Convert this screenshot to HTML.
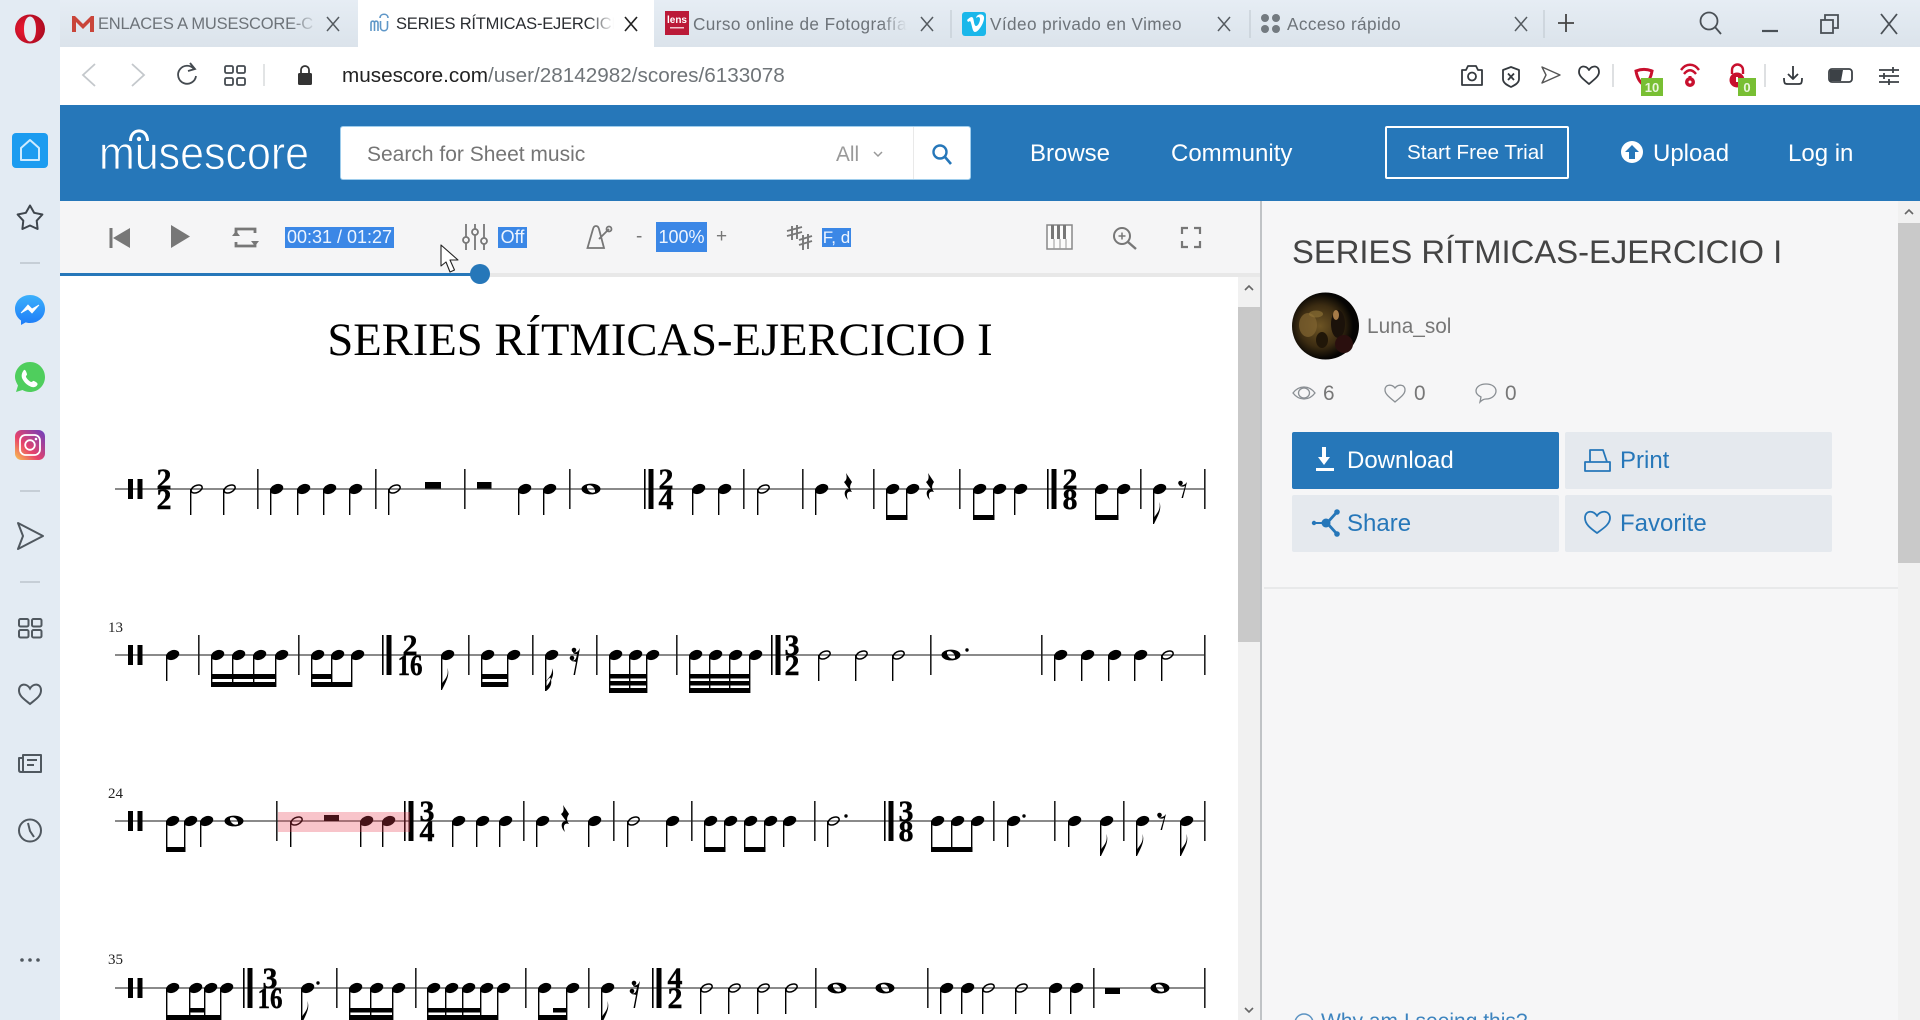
<!DOCTYPE html>
<html lang="en"><head><meta charset="utf-8"><title>SERIES RÍTMICAS-EJERCICIO I</title>
<style>
html,body{margin:0;padding:0;width:1920px;height:1020px;overflow:hidden;background:#fff;font-family:"Liberation Sans",sans-serif}
.a{position:absolute}
.t{position:absolute;white-space:nowrap}
.tab{font-size:17.2px;letter-spacing:.4px;line-height:24px;top:12px;color:#6d7379;overflow:hidden}
.cap{font-size:16.5px;letter-spacing:-.2px}
.f{-webkit-mask-image:linear-gradient(to right,#000 88%,transparent);mask-image:linear-gradient(to right,#000 88%,transparent)}
.nav{color:#fff;font-size:24px;line-height:30px;top:139px}
.sel{background:#3b87e6;color:#eef5ff;font-size:18px;line-height:21px;top:227px;height:21px;text-align:center}
.pm{color:#777;font-size:19px;line-height:22px;top:226px}
.stat{color:#777;font-size:20.8px;line-height:24px;top:382px}
.btn{position:absolute;border-radius:2px;background:#e5e9ee;color:#2677b9;font-size:24px;line-height:57px;height:57px;width:267px}
svg{position:absolute;left:0;top:0}
.ts{font:bold 30px "Liberation Serif",serif;text-anchor:middle;stroke:#000;stroke-width:.4}
.mn{font:15px "Liberation Serif",serif;fill:#222}
</style></head><body>
<!-- chrome backgrounds -->
<div class="a" style="left:0;top:0;width:1920px;height:47px;background:linear-gradient(#e6edf4,#dbe3eb)"></div>
<div class="a" style="left:0;top:0;width:60px;height:1020px;background:#e3ebf3"></div>
<div class="a" style="left:358px;top:0;width:296px;height:47px;background:#fff"></div>
<div class="a" style="left:60px;top:47px;width:1860px;height:58px;background:#fff"></div>
<div class="a" style="left:60px;top:105px;width:1860px;height:96px;background:#2677b9"></div>
<div class="a" style="left:60px;top:201px;width:1200px;height:72px;background:#f5f5f6"></div>
<div class="a" style="left:480px;top:273px;width:780px;height:4px;background:#e8e8e8"></div>
<div class="a" style="left:60px;top:273px;width:420px;height:3px;background:#2677b9"></div>
<div class="a" style="left:1238px;top:277px;width:22px;height:743px;background:#f1f1f1"></div>
<div class="a" style="left:1238px;top:307px;width:22px;height:335px;background:#c9c9c9"></div>
<div class="a" style="left:1260px;top:201px;width:2px;height:819px;background:#c0c3c6"></div>
<div class="a" style="left:1262px;top:201px;width:658px;height:819px;background:#f6f6f7"></div>
<div class="a" style="left:1898px;top:201px;width:22px;height:819px;background:#f1f1f1"></div>
<div class="a" style="left:1898px;top:223px;width:22px;height:340px;background:#c9c9c9"></div>
<div class="a" style="left:1264px;top:587px;width:634px;height:2px;background:#e8e9ea"></div>
<!-- search -->
<div class="a" style="left:341px;top:127px;width:629px;height:52px;background:#fff;border-radius:2px;box-shadow:0 0 0 1px #9fcdec"></div>
<div class="a" style="left:913px;top:127px;width:1px;height:52px;background:#e9e9e9"></div>
<!-- trial button -->
<div class="a" style="left:1385px;top:126px;width:184px;height:53px;border:2px solid #fff;box-sizing:border-box;border-radius:2px"></div>

<!-- tab text -->
<div class="t tab cap f" style="left:98px;width:220px">ENLACES A MUSESCORE-C</div>
<div class="t tab cap f" style="left:396px;width:218px;color:#2a2d31">SERIES RÍTMICAS-EJERCICI</div>
<div class="t tab f" style="left:693px;width:214px">Curso online de Fotografía</div>
<div class="t tab" style="left:990px">Vídeo privado en Vimeo</div>
<div class="t tab" style="left:1287px">Acceso rápido</div>
<!-- url -->
<div class="t" style="left:342px;top:63px;font-size:20.7px;line-height:26px;color:#222">musescore.com<span style="color:#6f7478">/user/28142982/scores/6133078</span></div>
<!-- search text -->
<div class="t" style="left:367px;top:142px;font-size:21px;line-height:26px;color:#757575">Search for Sheet music</div>
<div class="t" style="left:836px;top:142px;font-size:20.8px;line-height:26px;color:#999">All</div>
<div class="t nav" style="left:1030px">Browse</div>
<div class="t nav" style="left:1171px">Community</div>
<div class="t" style="left:1407px;top:140px;font-size:20.7px;line-height:26px;color:#fff">Start Free Trial</div>
<div class="t nav" style="left:1653px">Upload</div>
<div class="t nav" style="left:1788px">Log in</div>
<!-- toolbar text -->
<div class="t sel" style="left:285px;width:109px">00:31 / 01:27</div>
<div class="t sel" style="left:498px;width:29px">Off</div>
<div class="t sel" style="left:656px;top:222px;width:51px;height:30px;line-height:30px">100%</div>
<div class="t sel" style="left:822px;width:29px;top:228px;height:19px;line-height:19px;font-size:17px">F, d</div>
<div class="t pm" style="left:636px">-</div>
<div class="t pm" style="left:716px">+</div>
<!-- right panel -->
<div class="t" style="left:1292px;top:232px;font-size:32.8px;line-height:40px;color:#444">SERIES RÍTMICAS-EJERCICIO I</div>
<div class="t" style="left:1367px;top:315px;font-size:20.8px;line-height:24px;color:#777">Luna_sol</div>
<div class="t stat" style="left:1323px">6</div>
<div class="t stat" style="left:1414px">0</div>
<div class="t stat" style="left:1505px">0</div>
<div class="btn" style="left:1292px;top:432px;background:#2677b9;color:#fff;text-indent:55px">Download</div>
<div class="btn" style="left:1565px;top:432px;text-indent:55px">Print</div>
<div class="btn" style="left:1292px;top:495px;text-indent:55px">Share</div>
<div class="btn" style="left:1565px;top:495px;text-indent:55px">Favorite</div>

<svg width="1920" height="1020" viewBox="0 0 1920 1020" xmlns="http://www.w3.org/2000/svg">
<defs>
<linearGradient id="ms" x1="0" y1="1" x2="0" y2="0"><stop offset="0" stop-color="#1e7cf8"/><stop offset="1" stop-color="#3cb0fb"/></linearGradient>
<linearGradient id="ig" x1="0" y1="1" x2="1" y2="0"><stop offset="0" stop-color="#f9c74f"/><stop offset=".4" stop-color="#e8436a"/><stop offset="1" stop-color="#6a3fc0"/></linearGradient>
<radialGradient id="op" cx=".35" cy=".5" r=".7"><stop offset="0" stop-color="#f01a32"/><stop offset="1" stop-color="#a80a20"/></radialGradient>
<radialGradient id="av" cx=".42" cy=".5" r=".52"><stop offset="0" stop-color="#6d5424"/><stop offset=".6" stop-color="#3c2c12"/><stop offset=".95" stop-color="#050403"/></radialGradient>
<g id="hd"><ellipse cx="6.6" rx="6.9" ry="4.7" transform="rotate(-22 6.6 0)"/></g>
<g id="q"><use href="#hd"/><rect x="0" width="1.4" height="26"/></g>
<g id="q2"><use href="#hd"/><rect x="0" width="1.4" height="32"/></g>
<g id="q3"><use href="#hd"/><rect x="0" width="1.4" height="38"/></g>
<g id="h"><ellipse cx="6.6" rx="5.9" ry="3.5" fill="none" stroke="#000" stroke-width="1.5" transform="rotate(-25 6.6 0)"/><rect x="0" width="1.4" height="26"/></g>
<path id="w" fill-rule="evenodd" d="M-9.5 0a9.5 5.4 0 1 0 19 0a9.5 5.4 0 1 0-19 0ZM-4-3C0-5.500 4.500-1 4 3 0 5.500-4.500 1-4-3Z"/>
<g id="e"><use href="#hd"/><path d="M0 0h1.400v28c2.500-4 6.500-7 5-15 2.600 7-1 13-5.400 22H0Z"/></g>
<g id="s"><use href="#hd"/><path d="M0 0h1.400v26c2.500-4 6.500-6 5.500-13 2.500 6 .500 9-.8 12 1 5-2 9-5 11H0ZM1.500 31c2-2 4-5 4.300-8-1-1-3 1.500-4.300 3.500Z"/></g>
<rect id="b" x="0" y="-20" width="1.600" height="40" fill="#222"/>
<g id="d"><rect x="0" y="-20" width="1.600" height="40"/><rect x="4.500" y="-20" width="5" height="40"/></g>
<path id="r4" d="M-2-16 4-7C2-4 1-1 4 3 1 2-3 3 0 11-5 6-4 0 1 0L-4-7C-1-9-1-12-2-16Z"/>
<g id="r8"><circle cx="-2.500" cy="-6" r="2.300"/><path d="M-4-4C-1-3 2-4 4-7L0 9H-1.500L2-3C0-2-3-2-4-4Z"/></g>
<g id="r16"><circle cx="-1" cy="-5" r="2.300"/><circle cx="-3" cy="3" r="2.300"/><path d="M-2-3C1-2 3-3 5-7L0 20H-1.500L1 7C-1 6-3 7-4 5 0 6 1 5 2-1 0-1-2-1-2-3Z"/></g>
<g id="cl"><path d="M115 0H1204" stroke="#444" stroke-width="1.200" fill="none"/><rect x="128" y="-10" width="5" height="20"/><rect x="137.500" y="-10" width="5" height="20"/></g>
</defs>

<!-- opera & sidebar -->
<path fill="url(#op)" fill-rule="evenodd" d="M15 29a15 14.500 0 1 0 30 0a15 14.500 0 1 0-30 0ZM24 29c0-8 2.700-12.500 6-12.500s6 4.500 6 12.500-2.700 12.500-6 12.500-6-4.500-6-12.500Z"/>
<rect x="12" y="133" width="36" height="35" rx="4" fill="#1c9cf0"/>
<path d="M30 140 39 148V160H21V148Z" fill="none" stroke="#cdeBff" stroke-width="2" stroke-linejoin="round"/>
<polygon points="30,205.500 34.100,212.800 42.400,214.500 36.700,220.700 37.600,229 30,225.500 22.400,229 23.300,220.700 17.600,214.500 25.900,212.800" fill="none" stroke="#3f464d" stroke-width="2" stroke-linejoin="round"/>
<rect x="20" y="262" width="20" height="2" fill="#c6ced6"/>
<rect x="20" y="490" width="20" height="2" fill="#c6ced6"/>
<rect x="20" y="581" width="20" height="2" fill="#c6ced6"/>
<path d="M30 295c8.500 0 15 6 15 14 0 8-6.500 14-15 14-1.500 0-3-.2-4.300-.6L21 325v-4.500C17.500 318 15 314 15 309c0-8 6.500-14 15-14Z" fill="url(#ms)"/>
<path d="M21 313 28 305 32 309 39 305 32 313 28 309Z" fill="#fff" stroke="#fff" stroke-width=".8"/>
<path d="M30 362c8.300 0 15 6.700 15 15s-6.700 15-15 15c-2.700 0-5.300-.7-7.500-2L16 392l2-6.500c-1.300-2.300-3-5.500-3-8.500 0-8.300 6.700-15 15-15Z" fill="#4fce5d"/>
<path d="M24 370c1.500-1 2.500 2.500 3 4 .3 1-1.500 2-1 3 1 2 3 4 5 5 1 .3 2-1.500 3-1 1.500.7 4 2 3.500 3.500-1 2.500-4 3.500-7 2-4-1.500-7-5-8.500-8.500-1-3 .5-6.500 2-8Z" fill="#fff"/>
<rect x="15" y="430" width="30" height="30" rx="6.500" fill="url(#ig)"/>
<rect x="20" y="435" width="20" height="20" rx="5.500" fill="none" stroke="#fff" stroke-width="1.800"/><circle cx="30" cy="445" r="4.800" fill="none" stroke="#fff" stroke-width="1.800"/><circle cx="36" cy="439" r="1.300" fill="#fff"/>
<path d="M18 523 43 536 18 549 23 536Z" fill="none" stroke="#50585f" stroke-width="2" stroke-linejoin="round"/>
<g fill="none" stroke="#50585f" stroke-width="2"><rect x="19" y="619" width="9.500" height="7.500" rx="1.500"/><rect x="32" y="619" width="9.500" height="7.500" rx="1.500"/><rect x="19" y="630" width="9.500" height="7.500" rx="1.500"/><rect x="32" y="630" width="9.500" height="7.500" rx="1.500"/>
<path d="M30 704C24 699 19 696 19 690.500 19 683 27 683 30 688.500 33 683 41 683 41 690.500 41 696 36 699 30 704Z"/>
<path d="M23 755H41V772H21C19.500 772 19 771 19 770V758H23ZM23 758V771M27 760H37M27 765H34" stroke-linejoin="round"/>
<circle cx="30" cy="830.500" r="11"/><path d="M28 823 30 831 34 837"/></g>
<g fill="#50585f"><circle cx="22" cy="960" r="1.800"/><circle cx="30" cy="960" r="1.800"/><circle cx="38" cy="960" r="1.800"/></g>

<!-- tabs icons -->
<path d="M72 32V16H75L83 24 91 16H94V32H90V22L83 29 76 22V32Z" fill="#c9453a"/>
<g fill="none" stroke="#5f97c8" stroke-width="1.600"><path d="M371 31V23c0-2.500 3.500-2.500 3.500 0v8M374.500 23c0-2.500 3.500-2.500 3.500 0v8"/><path d="M380.500 21v6c0 5 7 5 7 0v-6M380 18c0-5 8-5 8 0"/></g>
<rect x="665" y="11" width="24" height="24" fill="#bb1a38"/><text x="677" y="23" font-family="Liberation Sans" font-size="10" font-weight="bold" fill="#fff" text-anchor="middle">lens</text><rect x="670" y="27" width="14" height="1.500" fill="#f2c4cd"/>
<rect x="962" y="12" width="24" height="24" rx="3" fill="#1ab7ea"/><path d="M967 20c3-3 5-4 6-2 1 2 1 8 3 8s4-4 4-7-3-2-4-1c1-5 9-5 8 1-1 6-6 13-9 13-3 0-3-9-5-11l-2 1Z" fill="#fff"/>
<g fill="#737a80"><circle cx="1265" cy="18" r="4"/><circle cx="1276" cy="18" r="4"/><circle cx="1265" cy="29" r="4"/><circle cx="1276" cy="29" r="4"/></g>
<g stroke="#555b60" stroke-width="1.500" fill="none">
<path d="M327 17 339 31M339 17 327 31"/><path d="M921 17 933 31M933 17 921 31"/><path d="M1218 17 1230 31M1230 17 1218 31"/><path d="M1515 17 1527 31M1527 17 1515 31"/></g>
<path d="M625 17 637 31M637 17 625 31" stroke="#222" stroke-width="1.600"/>
<path d="M951 10V38M1250 10V38M1544 10V38" stroke="#c3cbd3" stroke-width="1.200"/>
<path d="M1566 14V32M1558 23H1574" stroke="#444" stroke-width="1.800"/>
<g fill="none" stroke="#4a5056" stroke-width="1.800"><circle cx="1709" cy="21" r="8.500"/><path d="M1715 27 1721 34"/><path d="M1762 31H1778" stroke-width="2.200"/><rect x="1821" y="20" width="12" height="13"/><path d="M1825 20V15H1838V28H1833"/><path d="M1881 14 1897 34M1897 14 1881 34"/></g>

<!-- address bar icons -->
<path d="M95 64 83 75 95 86" fill="none" stroke="#c4c8cc" stroke-width="1.800"/>
<path d="M132 64 144 75 132 86" fill="none" stroke="#c4c8cc" stroke-width="1.800"/>
<path d="M194 69A9 9 0 1 0 196 76M190 63 195 69 188 71" fill="none" stroke="#444a50" stroke-width="1.800"/>
<g fill="none" stroke="#444a50" stroke-width="1.800"><rect x="225" y="66" width="8" height="7" rx="1.500"/><rect x="237" y="66" width="8" height="7" rx="1.500"/><rect x="225" y="78" width="8" height="7" rx="1.500"/><rect x="237" y="78" width="8" height="7" rx="1.500"/></g>
<path d="M264 64V86" stroke="#d8dadc" stroke-width="1.500"/>
<path d="M301 73V70a4 4 0 0 1 8 0V73" fill="none" stroke="#333" stroke-width="1.800"/><rect x="298" y="73" width="14" height="12" rx="1.500" fill="#333"/>
<g fill="none" stroke="#34393e" stroke-width="1.800" stroke-linejoin="round"><path d="M1462 70H1466L1468 66H1476L1478 70H1482V85H1462Z"/><circle cx="1472" cy="76.500" r="4"/>
<path d="M1511 67 1519 70V79C1519 83 1515 85 1511 87 1507 85 1503 83 1503 79V70ZM1508 73.500 1514 80M1514 73.500 1508 80"/>
<path d="M1542 67 1560 75 1542 83 1546 75Z" stroke-width="1.400" stroke="#555"/>
<path d="M1589 84C1583 79 1579 76 1579 72 1579 65 1586 65 1589 70 1592 65 1599 65 1599 72 1599 76 1595 79 1589 84Z"/>
<path d="M1793 66V79M1788 74 1793 79 1798 74M1784 78C1784 84 1785 84 1788 84H1798C1801 84 1802 84 1802 78"/></g>
<path d="M1613 64V87M1765 64V87" stroke="#d4d6d8" stroke-width="1.500"/>
<rect x="1829" y="69" width="23" height="13" rx="3" fill="none" stroke="#3c4146" stroke-width="1.800"/><path d="M1830 70H1843L1841 81H1830Z" fill="#3c4146"/>
<g stroke="#3c4146" stroke-width="1.800" fill="none"><path d="M1879 70H1899M1879 76H1899M1879 82H1899"/><path d="M1893 67V73M1884 73V79M1889 79V85"/></g>
<path d="M1636 71C1641 69 1647 69 1652 71 1651 77 1649 82 1644 85 1639 82 1637 77 1636 71Z" fill="none" stroke="#c8102e" stroke-width="3"/>
<rect x="1641" y="78" width="22" height="18" fill="#78bf33"/><text x="1652" y="92" font-size="13" font-weight="bold" text-anchor="middle" fill="#e9f5dc" font-family="Liberation Sans">10</text>
<g fill="none" stroke="#c8102e" stroke-width="2.400"><path d="M1681 70C1686 63 1694 63 1699 70M1684 74C1688 69 1692 69 1696 74"/></g><circle cx="1690" cy="82" r="5" fill="#c8102e"/><rect x="1688.500" y="76" width="3" height="6" fill="#c8102e"/><circle cx="1690" cy="82" r="1.500" fill="#fff"/>
<path d="M1732 74V70a5.500 5.500 0 0 1 11 0V74" fill="none" stroke="#c8102e" stroke-width="2.400"/><circle cx="1737" cy="80" r="7.500" fill="#c8102e"/><rect x="1736" y="77" width="2" height="5" fill="#fff"/>
<rect x="1738" y="78" width="18" height="18" fill="#78bf33"/><text x="1747" y="92" font-size="13" font-weight="bold" text-anchor="middle" fill="#e9f5dc" font-family="Liberation Sans">0</text>

<!-- logo -->
<text x="99" y="169" font-family="Liberation Sans" font-size="46" fill="#fff" stroke="#2677b9" stroke-width=".8" textLength="210" lengthAdjust="spacingAndGlyphs">musescore</text>
<path d="M130.500 141C130.500 127.500 147.500 127.500 147.500 141" fill="none" stroke="#fff" stroke-width="3"/><circle cx="139" cy="139" r="2.200" fill="#fff"/>
<!-- search icons -->
<path d="M874 152 878 156 882 152" fill="none" stroke="#999" stroke-width="1.500"/>
<circle cx="940" cy="152" r="6.500" fill="none" stroke="#2677b9" stroke-width="2.400"/><path d="M945 157 951 164" stroke="#2677b9" stroke-width="2.600"/>
<circle cx="1632" cy="152" r="11" fill="#fff"/><path d="M1632 145 1639 152H1635V159H1629V152H1625Z" fill="#2677b9"/>

<!-- toolbar icons -->
<g fill="#777"><rect x="109.500" y="228" width="3" height="20"/><path d="M130 228V248L113 238Z"/><path d="M171 225 190 236.500 171 248Z"/></g>
<g fill="none" stroke="#777" stroke-width="2.800">
<path d="M236 233V229H255V233M255 242V246H236V242"/></g><path d="M232 236 236 231 240 236ZM251 241 255 246 259 241Z" fill="#777"/>
<g fill="none" stroke="#777"><path d="M466 224V250M475 224V250M484 224V250" stroke-width="1.800"/></g>
<g fill="#f5f5f6" stroke="#777" stroke-width="1.800"><circle cx="466" cy="240" r="3"/><circle cx="475" cy="232" r="3"/><circle cx="484" cy="241" r="3"/></g>
<g fill="none" stroke="#777" stroke-width="1.800"><path d="M587.500 248 593 229C594 225 598 225 599 229L604 248ZM599 239 609 229"/><circle cx="609" cy="229" r="2.500"/></g>
<g fill="none" stroke="#777" stroke-width="1.900"><path d="M792 226V240M797 225V239M787 231 802 227M787 236 802 232"/><path d="M803 235V250M808 234V249M799 240 812 236M799 245 812 241"/></g>
<rect x="1047" y="225" width="25" height="24" fill="#fbfbfb" stroke="#888" stroke-width="1.500"/><g fill="#777"><rect x="1051" y="225" width="3" height="14"/><rect x="1057" y="225" width="3" height="14"/><rect x="1063" y="225" width="3" height="14"/></g><path d="M1054 239V249M1060 239V249M1066 239V249" stroke="#999"/>
<circle cx="1122" cy="236" r="8" fill="none" stroke="#777" stroke-width="2"/><path d="M1128 242 1136 249" stroke="#777" stroke-width="2.400"/><path d="M1118.500 236H1125.500M1122 232.500V239.500" stroke="#777" stroke-width="1.500"/>
<path d="M1182 234V228H1188M1194 228H1200V234M1200 241V247H1194M1188 247H1182V241" fill="none" stroke="#777" stroke-width="2.200"/>
<!-- progress knob & cursor -->
<circle cx="480" cy="274" r="10" fill="#2677b9"/>
<path d="M441 245 441 266 446 262 450 272 454.500 270 450 260 458 260Z" fill="#fff" stroke="#222" stroke-width="1.100" stroke-linejoin="round"/>
<!-- scrollbar arrows -->
<path d="M1245 290 1249 286 1253 290M1905 214 1909 210 1913 214" fill="none" stroke="#666" stroke-width="1.600"/>
<path d="M1245 1008 1249 1012 1253 1008" fill="none" stroke="#666" stroke-width="1.600"/>

<!-- panel icons -->
<circle cx="1325.500" cy="326" r="33.500" fill="url(#av)"/>
<g><ellipse cx="1308" cy="325" rx="9" ry="12" fill="#7f6330" opacity=".75"/><ellipse cx="1316" cy="314" rx="7" ry="3.500" fill="#927638" opacity=".6"/><ellipse cx="1338" cy="324" rx="7" ry="14" fill="#1b120a"/><ellipse cx="1336" cy="315" rx="3" ry="5" fill="#a67b48"/><ellipse cx="1344" cy="344" rx="9" ry="9" fill="#2a0f0e"/><ellipse cx="1322" cy="340" rx="6" ry="8" fill="#201608"/></g>
<g fill="none" stroke="#8a8f94" stroke-width="1.300"><path d="M1293 393C1299 385 1309 385 1315 393 1309 401 1299 401 1293 393Z"/><ellipse cx="1304" cy="393" rx="5.500" ry="5"/>
<path d="M1395 402C1389 397 1385 394 1385 390 1385 384 1392 384 1395 388 1398 384 1405 384 1405 390 1405 394 1401 397 1395 402Z"/>
<path d="M1486 384C1492 384 1496 387 1496 391 1496 395 1492 399 1486 399 1484 399 1482 400 1480 402L1481 397C1477 395 1476 393 1476 391 1476 387 1480 384 1486 384Z"/></g>
<g fill="#fff"><rect x="1322" y="447" width="4" height="11"/><path d="M1318 457H1330L1324 465Z"/><rect x="1316" y="468" width="18" height="3"/></g>
<g fill="none" stroke="#2677b9" stroke-width="1.800" stroke-linejoin="round"><path d="M1585 462H1610V471H1585ZM1590 462V450H1603L1607 462"/>
<path d="M1597 533C1590 528 1585 524 1585 518 1585 510 1594 510 1597 516 1600 510 1610 510 1610 518 1610 524 1604 528 1597 533Z"/></g>
<g fill="#2677b9"><circle cx="1326" cy="523" r="4.500"/><circle cx="1337" cy="512" r="2.800"/><circle cx="1337" cy="534" r="2.800"/><circle cx="1314" cy="523" r="2.200"/><path d="M1314 522H1326V524H1314ZM1326 522 1336 511 1338 513 1328 524ZM1326 524 1336 535 1338 533 1328 522Z"/></g>
<circle cx="1304" cy="1023" r="9" fill="none" stroke="#5c93c2" stroke-width="1.500"/><text x="1321" y="1028" font-family="Liberation Sans" font-size="21" fill="#3d84bf">Why am I seeing this?</text>

<!-- score -->
<text x="660" y="355" text-anchor="middle" font-family="Liberation Serif" font-size="46.600" fill="#000">SERIES RÍTMICAS-EJERCICIO I</text>

<g transform="translate(0,489)">
<use href="#cl"/><text class="ts" x="164" y="0">2</text><text class="ts" x="164" y="20">2</text>
<use href="#h" x="190"/><use href="#h" x="223"/><use href="#b" x="257"/>
<use href="#q" x="270"/><use href="#q" x="297"/><use href="#q" x="323"/><use href="#q" x="349"/><use href="#b" x="375"/>
<use href="#h" x="388"/><rect x="425" y="-7" width="16" height="6.500"/><use href="#b" x="464"/>
<rect x="477" y="-7" width="14.500" height="6.500"/><use href="#q" x="518"/><use href="#q" x="543"/><use href="#b" x="569"/>
<use href="#w" x="591"/><use href="#d" x="644"/><text class="ts" x="666" y="0">2</text><text class="ts" x="666" y="20">4</text>
<use href="#q" x="692"/><use href="#q" x="718"/><use href="#b" x="743"/><use href="#h" x="757"/><use href="#b" x="802"/>
<use href="#q" x="815"/><use href="#r4" x="848"/><use href="#b" x="873"/>
<use href="#q" x="886"/><use href="#q" x="906"/><rect x="886" y="26" width="21.500" height="5"/><use href="#r4" x="930"/><use href="#b" x="959"/>
<use href="#q" x="973"/><use href="#q" x="993"/><rect x="973" y="26" width="21.500" height="5"/><use href="#q" x="1014"/>
<use href="#d" x="1047"/><text class="ts" x="1070" y="0">2</text><text class="ts" x="1070" y="20">8</text>
<use href="#q" x="1095"/><use href="#q" x="1117"/><rect x="1095" y="26" width="23.500" height="5"/><use href="#b" x="1140"/>
<use href="#e" x="1153"/><use href="#r8" x="1183"/><use href="#b" x="1204"/>
</g>

<text class="mn" x="108" y="632">13</text>
<g transform="translate(0,655)">
<use href="#cl"/><use href="#q" x="166"/><use href="#b" x="198"/>
<use href="#q2" x="211"/><use href="#q2" x="232"/><use href="#q2" x="253"/><use href="#q2" x="275"/><rect x="211" y="19" width="65" height="5"/><rect x="211" y="27" width="65" height="5"/><use href="#b" x="298"/>
<use href="#q2" x="311"/><use href="#q2" x="331"/><use href="#q2" x="351"/><rect x="311" y="19" width="21" height="5"/><rect x="311" y="27" width="41" height="5"/>
<use href="#d" x="382"/><text class="ts" x="410" y="0">2</text><text class="ts" x="410" y="20" textLength="25" lengthAdjust="spacingAndGlyphs">16</text>
<use href="#e" x="441"/><use href="#b" x="468"/>
<use href="#q2" x="481"/><use href="#q2" x="507"/><rect x="481" y="19" width="27" height="5"/><rect x="481" y="27" width="27" height="5"/><use href="#b" x="532"/>
<use href="#s" x="545"/><use href="#r16" x="575"/><use href="#b" x="596"/>
<use href="#q3" x="609"/><use href="#q3" x="629"/><use href="#q3" x="646"/><rect x="609" y="19" width="38" height="4.500"/><rect x="609" y="26" width="38" height="4.500"/><rect x="609" y="33" width="38" height="5"/><use href="#b" x="676"/>
<use href="#q3" x="689"/><use href="#q3" x="709"/><use href="#q3" x="729"/><use href="#q3" x="749"/><rect x="689" y="19" width="61" height="4.500"/><rect x="689" y="26" width="61" height="4.500"/><rect x="689" y="33" width="61" height="5"/>
<use href="#d" x="771"/><text class="ts" x="792" y="0">3</text><text class="ts" x="792" y="20">2</text>
<use href="#h" x="818"/><use href="#h" x="855"/><use href="#h" x="892"/><use href="#b" x="930"/>
<use href="#w" x="951"/><circle cx="967" cy="-5" r="1.700"/><use href="#b" x="1041"/>
<use href="#q" x="1054"/><use href="#q" x="1081"/><use href="#q" x="1108"/><use href="#q" x="1134"/><use href="#h" x="1161"/><use href="#b" x="1204"/>
</g>

<text class="mn" x="108" y="798">24</text>
<g transform="translate(0,821)">
<use href="#cl"/><use href="#q" x="166"/><use href="#q" x="184"/><rect x="166" y="26" width="19.500" height="5"/><use href="#q" x="200"/><use href="#w" x="234"/><use href="#b" x="276"/>
<use href="#h" x="290"/><rect x="324" y="-6" width="15" height="6"/><use href="#q" x="360"/><use href="#q" x="382"/>
<use href="#d" x="404"/><rect x="278" y="-9" width="132" height="20" fill="#e83c50" opacity=".3"/>
<text class="ts" x="427" y="0">3</text><text class="ts" x="427" y="20">4</text>
<use href="#q" x="452"/><use href="#q" x="476"/><use href="#q" x="499"/><use href="#b" x="523"/>
<use href="#q" x="536"/><use href="#r4" x="565"/><use href="#q" x="588"/><use href="#b" x="613"/><use href="#h" x="627"/><use href="#q" x="666"/><use href="#b" x="691"/>
<use href="#q" x="704"/><use href="#q" x="724"/><rect x="704" y="26" width="21.500" height="5"/><use href="#q" x="744"/><use href="#q" x="764"/><rect x="744" y="26" width="21.500" height="5"/><use href="#q" x="783"/><use href="#b" x="814"/>
<use href="#h" x="827"/><circle cx="846" cy="-5" r="1.700"/><use href="#d" x="884"/><text class="ts" x="906" y="0">3</text><text class="ts" x="906" y="20">8</text>
<use href="#q" x="931"/><use href="#q" x="951"/><use href="#q" x="971"/><rect x="931" y="26" width="41.500" height="5"/><use href="#b" x="993"/>
<use href="#q" x="1007"/><circle cx="1024" cy="-5" r="1.700"/><use href="#b" x="1054"/><use href="#q" x="1068"/><use href="#e" x="1100"/><use href="#b" x="1123"/>
<use href="#e" x="1136"/><use href="#r8" x="1162"/><use href="#e" x="1180"/><use href="#b" x="1204"/>
</g>

<text class="mn" x="108" y="964">35</text>
<g transform="translate(0,988)">
<use href="#cl"/><use href="#q2" x="166"/><use href="#q2" x="189"/><use href="#q2" x="204"/><use href="#q2" x="220"/><rect x="166" y="27" width="55" height="5"/><rect x="189" y="20" width="16" height="4.500"/>
<use href="#d" x="243"/><text class="ts" x="270" y="0">3</text><text class="ts" x="270" y="20" textLength="25" lengthAdjust="spacingAndGlyphs">16</text>
<use href="#e" x="301"/><circle cx="318" cy="-5" r="1.700"/><use href="#b" x="336"/>
<use href="#q2" x="349"/><use href="#q2" x="370"/><use href="#q2" x="392"/><rect x="349" y="20" width="44" height="4.500"/><rect x="349" y="27" width="44" height="5"/><use href="#b" x="415"/>
<use href="#q2" x="427"/><use href="#q2" x="445"/><use href="#q2" x="462"/><use href="#q2" x="480"/><use href="#q2" x="497"/><rect x="427" y="20" width="53" height="4.500"/><rect x="427" y="27" width="71" height="5"/><use href="#b" x="525"/>
<use href="#q2" x="538"/><use href="#q2" x="566"/><rect x="538" y="27" width="29" height="5"/><rect x="553" y="20" width="14" height="4.500"/><use href="#b" x="588"/>
<use href="#e" x="601"/><use href="#r16" x="635"/><use href="#d" x="652"/><text class="ts" x="675" y="0">4</text><text class="ts" x="675" y="20">2</text>
<use href="#h" x="700"/><use href="#h" x="728"/><use href="#h" x="757"/><use href="#h" x="785"/><use href="#b" x="815"/><use href="#w" x="837"/><use href="#w" x="885"/><use href="#b" x="927"/>
<use href="#q" x="940"/><use href="#q" x="961"/><use href="#h" x="982"/><use href="#h" x="1015"/><use href="#q" x="1049"/><use href="#q" x="1070"/><use href="#b" x="1093"/>
<rect x="1105" y="0" width="15" height="6"/><use href="#w" x="1160"/><use href="#b" x="1204"/>
</g>
</svg>
</body></html>
